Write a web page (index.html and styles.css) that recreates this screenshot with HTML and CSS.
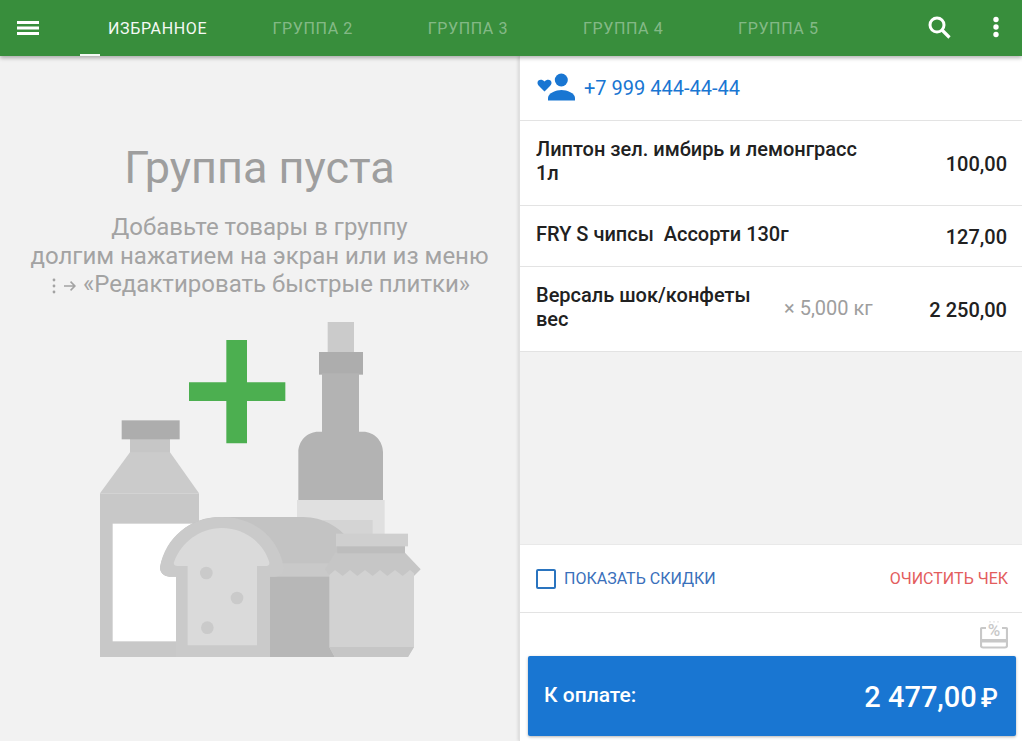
FILE: index.html
```html
<!DOCTYPE html>
<html lang="ru">
<head>
<meta charset="utf-8">
<title>Касса</title>
<link rel="stylesheet" href="styles.css">
</head>
<body>
<header class="topbar">
  <button class="icon-btn menu-btn" aria-label="Меню">
    <svg width="24" height="24" viewBox="0 0 24 24"><path d="M1 5h22v3H1zM1 10.500h22v3H1zM1 16h22v3H1z" fill="#fff"/></svg>
  </button>
  <nav class="tabs">
    <div class="tab active">Избранное<span class="indicator"></span></div>
    <div class="tab">Группа 2</div>
    <div class="tab">Группа 3</div>
    <div class="tab">Группа 4</div>
    <div class="tab">Группа 5</div>
  </nav>
  <div class="actions">
    <svg class="search" width="24" height="24" viewBox="0 0 24 24" fill="none" stroke="#fff"><circle cx="9" cy="9" r="7" stroke-width="3"/><path d="M14 14l7.500 7.500" stroke-width="3.200"/></svg>
    <svg class="more" width="8" height="22" viewBox="0 0 8 22"><circle cx="4" cy="3.500" r="2.700" fill="#fff"/><circle cx="4" cy="11" r="2.700" fill="#fff"/><circle cx="4" cy="18.500" r="2.700" fill="#fff"/></svg>
  </div>
</header>
<main class="content">
  <section class="left">
    <h1 class="empty-title">Группа пуста</h1>
    <p class="empty-text">Добавьте товары в группу<br>долгим нажатием на экран или из меню<br><svg class="hint-icon" width="28" height="16" viewBox="0 0 28 16"><g fill="#a3a3a3"><circle cx="5" cy="2" r="1.400"/><circle cx="5" cy="8" r="1.400"/><circle cx="5" cy="14" r="1.400"/><path d="M15 7.200h9l-3-3 1.100-1.100 4.900 4.900-4.900 4.900-1.100-1.100 3-3H15z"/></g></svg> «Редактировать быстрые плитки»</p>
    <svg class="art" width="340" height="360" viewBox="0 0 1020 1080">
      <!-- tall bottle -->
      <rect x="713" y="36" width="79" height="95" fill="#cbcbcb"/>
      <rect x="687" y="126" width="132" height="68" fill="#adadad"/>
      <path d="M696 190h111v175h12c34 0 60 28 60 62v145H625V427c0-34 26-62 60-62h11z" fill="#b3b3b3"/>
      <rect x="621" y="570" width="263" height="110" fill="#e0e0e0"/>
      <rect x="700" y="630" width="148" height="50" fill="#d4d4d4"/>
      <!-- milk bottle -->
      <rect x="120" y="385" width="120" height="45" fill="#c6c6c6"/>
      <rect x="95" y="331" width="174" height="57" fill="#adadad"/>
      <path d="M120 427h120l87 123H30z" fill="#cbcbcb"/>
      <rect x="30" y="550" width="297" height="491" fill="#c8c8c8"/>
      <rect x="68" y="641" width="240" height="353" fill="#fff"/>
      <!-- bread loaf -->
      <path d="M390 621h250c60 0 105 30 135 65v115H540v240H258V800h-20c-18 0-28-14-28-28 20-90 90-151 180-151z" fill="#c3c3c3"/>
      <rect x="540" y="760" width="200" height="40" fill="#c9c9c9"/>
      <path d="M540 800h200v241H540z" fill="#b7b7b7"/>
      <path d="M395 621c95 0 170 60 186 150 0 16-10 29-28 29h-13v241H258V800h-20c-18 0-28-14-28-28 16-90 90-151 185-151z" fill="#cacaca"/>
      <path d="M395 654c70 0 125 45 142 100 4 10-2 14-12 14h-24v238H293V768h-30c-10 0-14-6-10-14 20-55 75-100 142-100z" fill="#dadada"/>
      <circle cx="349" cy="789" r="19" fill="#cacaca"/>
      <circle cx="441" cy="864" r="19" fill="#cacaca"/>
      <circle cx="352" cy="953" r="19" fill="#cacaca"/>
      <!-- jar -->
      <path d="M735 728H945L992 778 968 802H722L705 778z" fill="#c6c6c6"/>
      <path d="M718 795L735 780 758 798 780 780 802 798 825 780 848 798 870 780 892 798 915 780 938 798 960 780 972 790V1011L954 1041H734L718 1011z" fill="#d2d2d2"/>
      <path d="M718 1011H972L954 1041H734z" fill="#c6c6c6"/>
      <rect x="742" y="708" width="203" height="22" fill="#bdbdbd"/>
      <rect x="738" y="671" width="216" height="38" fill="#cfcfcf"/>
      <!-- plus -->
      <path d="M409 90h62v127h115v56H471v127h-62V273H297v-56h112z" fill="#4caf50"/>
    </svg>
  </section>
  <aside class="right">
    <div class="client">
      <svg width="40" height="30" viewBox="0 0 40 30" fill="#1976d2">
        <path d="M8.500 18.500L3.500 13.500C2 12 1.500 11 1.500 9.800C1.500 8 3 6.800 4.800 6.800C6 6.800 7.600 7.400 8.500 8.600C9.400 7.400 11 6.800 12.200 6.800C14 6.800 15.500 8 15.500 9.800C15.500 11 15 12 13.500 13.500z"/>
        <circle cx="25.300" cy="7" r="6.500"/>
        <path d="M12 27.500v-2.500c0-5 8-8 13.500-8S39 20 39 25v2.500z"/>
      </svg>
      <span class="phone">+7 999 444-44-44</span>
    </div>
    <div class="item item-tall">
      <div class="item-name">Липтон зел. имбирь и лемонграсс 1л</div>
      <div class="item-price">100,00</div>
    </div>
    <div class="item item-short">
      <div class="item-name">FRY S чипсы&nbsp; Ассорти 130г</div>
      <div class="item-price">127,00</div>
    </div>
    <div class="item item-tall">
      <div class="item-name narrow">Версаль шок/конфеты вес</div>
      <div class="item-qty">× 5,000 кг</div>
      <div class="item-price">2 250,00</div>
    </div>
    <div class="spacer"></div>
    <div class="controls">
      <label class="check"><span class="box"></span>Показать скидки</label>
      <span class="clear">Очистить чек</span>
    </div>
    <div class="footer">
      <div class="discount-row">
        <svg width="28" height="28" viewBox="0 0 28 28" fill="none">
          <path d="M9 .8h10" stroke="#e6e6e6" stroke-width="1.200" stroke-dasharray="2 2"/>
          <path d="M6 7H2a1 1 0 0 0-1 1v16.500a2 2 0 0 0 2 2h22a2 2 0 0 0 2-2V8a1 1 0 0 0-1-1h-4" stroke="#c8c8c8" stroke-width="2.200"/>
          <rect x="1" y="18" width="26" height="3.500" fill="#c8c8c8"/>
          <text x="14" y="15" text-anchor="middle" class="percent">%</text>
        </svg>
      </div>
      <button class="pay">
        <span class="pay-label">К оплате:</span>
        <span class="pay-sum">2 477,00<span class="rub">₽</span></span>
      </button>
    </div>
  </aside>
</main>
</body>
</html>
```
FILE: styles.css
```css
* { box-sizing: border-box; }
html, body { height: 100%; }
body {
  margin: 0;
  width: 1022px;
  height: 741px;
  overflow: hidden;
  font-family: Roboto, "Liberation Sans", sans-serif;
  background: #f2f2f2;
  display: flex;
  flex-direction: column;
}
.topbar {
  height: 56px;
  flex: none;
  background: #388e3c;
  display: flex;
  align-items: center;
  box-shadow: 0 2px 4px rgba(0,0,0,.3);
  position: relative;
  z-index: 2;
}
.icon-btn { background: none; border: 0; padding: 0; display: flex; }
.menu-btn { margin-left: 16px; margin-right: 40px; }
.tabs { display: flex; height: 56px; }
.tab {
  width: 155.200px;
  display: flex;
  align-items: center;
  justify-content: center;
  font-size: 16px;
  letter-spacing: .65px;
  text-transform: uppercase;
  color: rgba(255,255,255,.4);
  position: relative;
  padding-top: 1px;
}
.tab.active { color: #fff; opacity: .95; }
.indicator {
  position: absolute;
  left: 0;
  bottom: 0;
  width: 20px;
  height: 2px;
  background: #fff;
}
.actions {
  margin-left: auto;
  display: flex;
  align-items: center;
  padding-right: 22px;
}
.search { margin-right: 40px; margin-top: -1px; }
.more { margin-top: -2px; }
.content { flex: 1; display: flex; min-height: 0; }
.left {
  width: 519px;
  flex: none;
  display: flex;
  flex-direction: column;
  align-items: center;
  background: #f2f2f2;
  overflow: hidden;
}
.empty-title {
  margin: 86px 0 0;
  font-size: 45px;
  font-weight: 400;
  line-height: 52px;
  color: #9e9e9e;
}
.empty-text {
  margin: 19px 0 0;
  font-size: 24px;
  line-height: 28.500px;
  text-align: center;
  color: #a3a3a3;
  white-space: nowrap;
}
.hint-icon { vertical-align: -2px; }
.art { display: block; margin-top: 11px; margin-left: 1px; flex: none; }
.right {
  width: 503px;
  flex: none;
  display: flex;
  flex-direction: column;
  background: #f2f2f2;
  border-left: 1px solid #e0e0e0;
  box-shadow: -1px 0 3px rgba(0,0,0,.12);
  position: relative;
  z-index: 1;
}
.client {
  height: 65px;
  flex: none;
  background: #fff;
  border-bottom: 1px solid #e3e3e3;
  display: flex;
  align-items: center;
  padding-left: 16px;
  gap: 8px;
}
.phone { font-size: 20px; color: #1976d2; }
.item {
  flex: none;
  background: #fff;
  border-bottom: 1px solid #e3e3e3;
  display: flex;
  align-items: center;
  padding: 0 15px 0 16px;
  font-size: 20px;
  line-height: 24px;
  color: #212121;
}
.item-tall { height: 85px; }
.item-short { height: 61px; }
.item-name { width: 335px; flex: none; padding-bottom: 5px; font-weight: 500; }
.item-name.narrow { width: 230px; }
.item-qty { margin-left: 18px; color: #9e9e9e; padding-bottom: 2px; }
.item-price { margin-left: auto; padding-top: 2px; font-weight: 500; }
.spacer { flex: 1; }
.controls {
  height: 69px;
  flex: none;
  background: #fff;
  border-top: 1px solid #e9e9e9;
  border-bottom: 1px solid #e3e3e3;
  display: flex;
  align-items: center;
  justify-content: space-between;
  padding: 0 14px 0 16px;
  font-size: 16px;
  text-transform: uppercase;
}
.check { display: flex; align-items: center; gap: 8px; color: #3a70bb; }
.box {
  width: 20px;
  height: 20px;
  border: 2px solid #2a74bf;
  border-radius: 2px;
}
.clear { color: #e35d5d; }
.footer { flex: none; height: 128px; background: #fff; padding: 0 6px 0 8px; }
.discount-row { height: 43px; display: flex; justify-content: flex-end; padding: 8px 8px 0 0; }
.percent { font: 500 17px Roboto, sans-serif; fill: #c8c8c8; }
.pay {
  width: 488px;
  height: 80px;
  border: 0;
  border-radius: 2px;
  background: #1976d2;
  color: #fff;
  display: flex;
  align-items: center;
  justify-content: space-between;
  padding: 0 18px 0 16px;
  font-family: inherit;
  box-shadow: 0 1px 3px rgba(0,0,0,.3);
}
.pay-label { font-size: 21px; font-weight: 500; padding-bottom: 2px; }
.pay-sum { font-size: 29px; font-weight: 500; padding-top: 1px; }
.rub { font-size: 25px; margin-left: 4px; }
```
